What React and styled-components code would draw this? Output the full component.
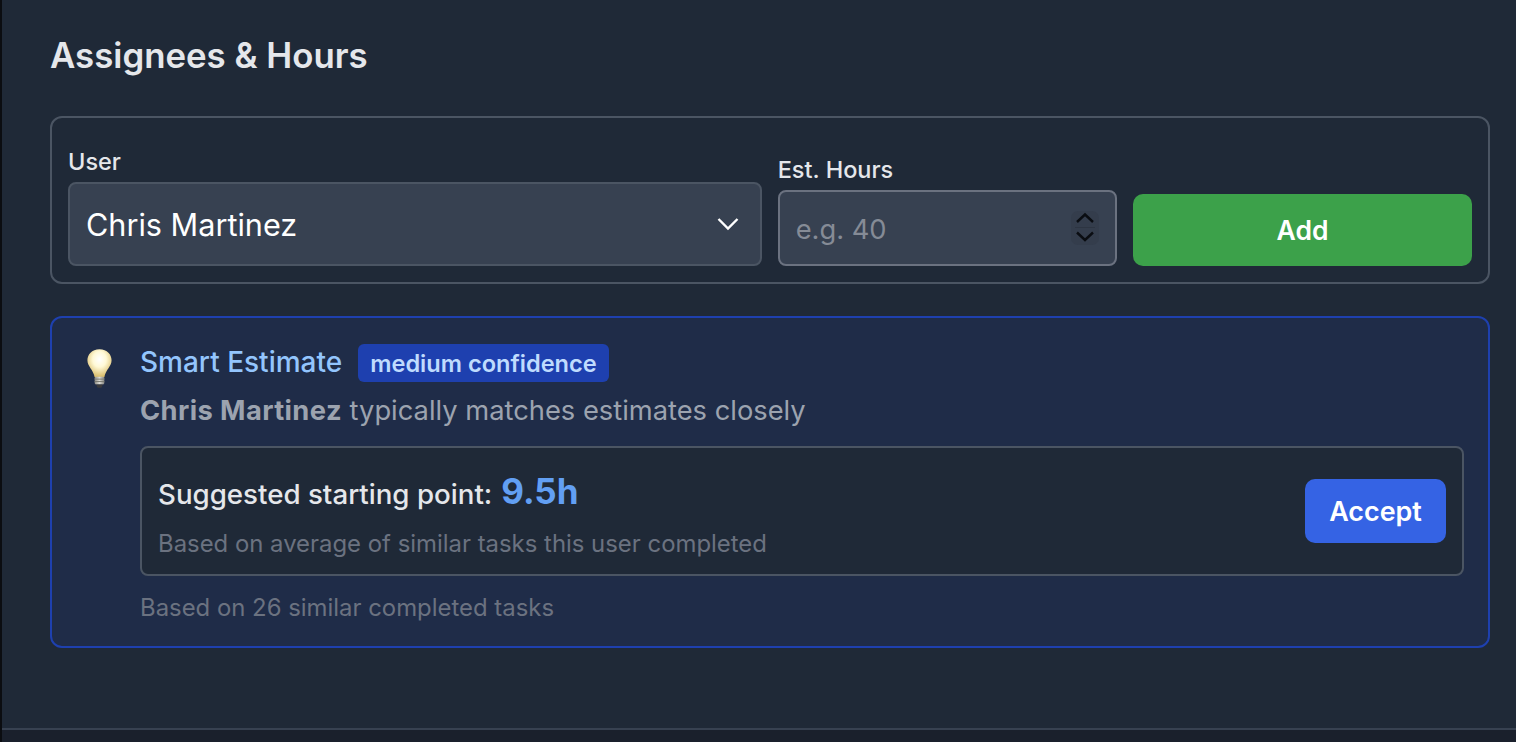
import React from "react";
import styled, { createGlobalStyle } from "styled-components";

const GlobalStyle = createGlobalStyle`
  html, body {
    margin: 0;
    height: 100%;
    overflow: hidden;
    background: #1a202c;
    font-family: Inter, "Noto Sans", sans-serif;
  }
  * { box-sizing: border-box; }
`;

const Page = styled.div`
  height: 742px;
  border-left: 2px solid #0b0d11;
  display: flex;
  flex-direction: column;
`;

const Panel = styled.section`
  height: 730px;
  padding: 34px 26px 0 48px;
  background: #1f2937;
  border-bottom: 2px solid #374151;
`;

const Heading = styled.h2`
  margin: 0 0 39px;
  font-size: 34.800px;
  line-height: 43px;
  font-weight: 600;
  color: #e5e7eb;
`;

const FormCard = styled.div`
  height: 168px;
  padding: 16px;
  display: flex;
  align-items: flex-end;
  gap: 16px;
  border: 2px solid #4b5563;
  border-radius: 12px;
`;

const Field = styled.div`
  flex: ${(p) => p.$grow} 1 0;
  display: flex;
  flex-direction: column;
  gap: 8px;
`;

const Label = styled.label`
  font-size: 23.500px;
  line-height: 24px;
  font-weight: 500;
  color: #e5e7eb;
`;

const SelectBox = styled.div`
  height: 84px;
  padding: 0 21px 0 16px;
  display: flex;
  align-items: center;
  justify-content: space-between;
  background: #374151;
  border: 2px solid #4b5563;
  border-radius: 8px;
  font-size: 30.600px;
  color: #fff;
`;

const InputBox = styled.div`
  height: 76px;
  padding: 0 15px 0 16px;
  display: flex;
  align-items: center;
  justify-content: space-between;
  background: #374151;
  border: 2px solid #6b7280;
  border-radius: 8px;
`;

const HoursInput = styled.input`
  width: 200px;
  padding: 2px 0 0;
  background: none;
  border: 0;
  outline: 0;
  font: inherit;
  font-size: 27.300px;
  color: #fff;
  &::placeholder { color: #858b96; opacity: 1; }
`;

const Stepper = styled.svg`
  display: block;
  margin-right: 1px;
`;

const AddButton = styled.button`
  flex: 0 0 339px;
  height: 72px;
  border: 0;
  border-radius: 10px;
  background: #3ca14a;
  color: #fff;
  font: inherit;
  font-size: 26.500px;
  font-weight: 600;
`;

const EstimateCard = styled.div`
  height: 332px;
  margin-top: 32px;
  padding: 24px 24px 0 33px;
  display: flex;
  gap: 26px;
  background: #1f2c48;
  border: 2px solid #1e40af;
  border-radius: 12px;
`;

const Bulb = styled.svg`
  flex: none;
  margin-top: 6px;
`;

const EstimateBody = styled.div`
  flex: 1;
  min-width: 0;
`;

const TitleRow = styled.div`
  height: 38px;
  display: flex;
  align-items: center;
  gap: 16px;
`;

const EstimateTitle = styled.span`
  padding-top: 2px;
  font-size: 28px;
  font-weight: 500;
  color: #93c5fd;
`;

const Badge = styled.span`
  height: 38px;
  margin-top: 4px;
  padding: 0 12px;
  display: flex;
  align-items: center;
  background: #1e40af;
  border-radius: 6px;
  font-size: 23.600px;
  font-weight: 600;
  color: #bfdbfe;
`;

const Reason = styled.p`
  margin: 13px 0 0;
  font-size: 27.300px;
  line-height: 36px;
  color: #9ca3af;
  strong {
    font-weight: 700;
    letter-spacing: 0.400px;
  }
`;

const SuggestBox = styled.div`
  height: 130px;
  margin-top: 17px;
  padding: 0 16px;
  display: flex;
  align-items: center;
  justify-content: space-between;
  background: #1f2937;
  border: 2px solid #4b5563;
  border-radius: 8px;
`;

const SuggestText = styled.div`
  padding-top: 5px;
`;

const SuggestLine = styled.div`
  display: flex;
  align-items: baseline;
  gap: 9px;
  font-size: 27.700px;
  font-weight: 500;
  color: #e5e7eb;
`;

const SuggestValue = styled.span`
  font-size: 35px;
  font-weight: 700;
  color: #629ff3;
`;

const SuggestNote = styled.div`
  margin-top: 17px;
  font-size: 23.900px;
  color: #6b7280;
`;

const AcceptButton = styled.button`
  width: 141px;
  height: 64px;
  border: 0;
  border-radius: 10px;
  background: #3563e4;
  color: #fff;
  font: inherit;
  font-size: 26.900px;
  font-weight: 600;
`;

const Footnote = styled.div`
  margin-top: 17px;
  font-size: 23.900px;
  color: #6b7280;
`;

const Foot = styled.div`
  flex: 1;
  background: #1a202c;
`;

function LightBulb() {
  return (
    <Bulb width="29" height="41" viewBox="0 0 30 42">
      <defs>
        <radialGradient id="glass" cx="50%" cy="36%" r="62%">
          <stop offset="0%" stopColor="#ffffff" />
          <stop offset="45%" stopColor="#fff9d6" />
          <stop offset="100%" stopColor="#d9bd6c" />
        </radialGradient>
        <linearGradient id="base" x1="0" y1="0" x2="1" y2="0">
          <stop offset="0%" stopColor="#8d8c85" />
          <stop offset="50%" stopColor="#dcdcd6" />
          <stop offset="100%" stopColor="#85847e" />
        </linearGradient>
      </defs>
      <path
        d="M15 1C7 1 2.500 6.500 2.500 12.500C2.500 19 8.500 22 10 30H20C21.500 22 27.500 19 27.500 12.500C27.500 6.500 23 1 15 1Z"
        fill="url(#glass)"
      />
      <rect x="10" y="29.500" width="10" height="8" rx="1.500" fill="url(#base)" />
      <path d="M10 32H20M10 34.500H20" stroke="#77776f" strokeWidth="1" />
      <path d="M11.500 37.500H18.500L17 41H13Z" fill="#3a3a3c" />
    </Bulb>
  );
}

export default function App() {
  return (
    <Page>
      <GlobalStyle />
      <Panel>
        <Heading>Assignees &amp; Hours</Heading>
        <FormCard>
          <Field $grow={693}>
            <Label>User</Label>
            <SelectBox>
              Chris Martinez
              <svg width="22" height="14" viewBox="0 0 22 14" fill="none">
                <path d="M1.500 2L11 11.500L20.500 2" stroke="#fff" strokeWidth="2.400" />
              </svg>
            </SelectBox>
          </Field>
          <Field $grow={339}>
            <Label>Est. Hours</Label>
            <InputBox>
              <HoursInput placeholder="e.g. 40" />
              <Stepper width="28" height="34" viewBox="0 0 28 34" fill="none">
                <rect width="28" height="34" rx="7" fill="#343d4c" />
                <path d="M6 11L14 3.500L22 11M6 21.500L14 29L22 21.500" stroke="#0a0d12" strokeWidth="2.400" />
                <path d="M4 16.500H24" stroke="#2d3542" strokeWidth="1" />
              </Stepper>
            </InputBox>
          </Field>
          <AddButton>Add</AddButton>
        </FormCard>

        <EstimateCard>
          <LightBulb />
          <EstimateBody>
            <TitleRow>
              <EstimateTitle>Smart Estimate</EstimateTitle>
              <Badge>medium confidence</Badge>
            </TitleRow>
            <Reason>
              <strong>Chris Martinez</strong> typically matches estimates closely
            </Reason>
            <SuggestBox>
              <SuggestText>
                <SuggestLine>
                  Suggested starting point:
                  <SuggestValue>9.5h</SuggestValue>
                </SuggestLine>
                <SuggestNote>Based on average of similar tasks this user completed</SuggestNote>
              </SuggestText>
              <AcceptButton>Accept</AcceptButton>
            </SuggestBox>
            <Footnote>Based on 26 similar completed tasks</Footnote>
          </EstimateBody>
        </EstimateCard>
      </Panel>
      <Foot />
    </Page>
  );
}
